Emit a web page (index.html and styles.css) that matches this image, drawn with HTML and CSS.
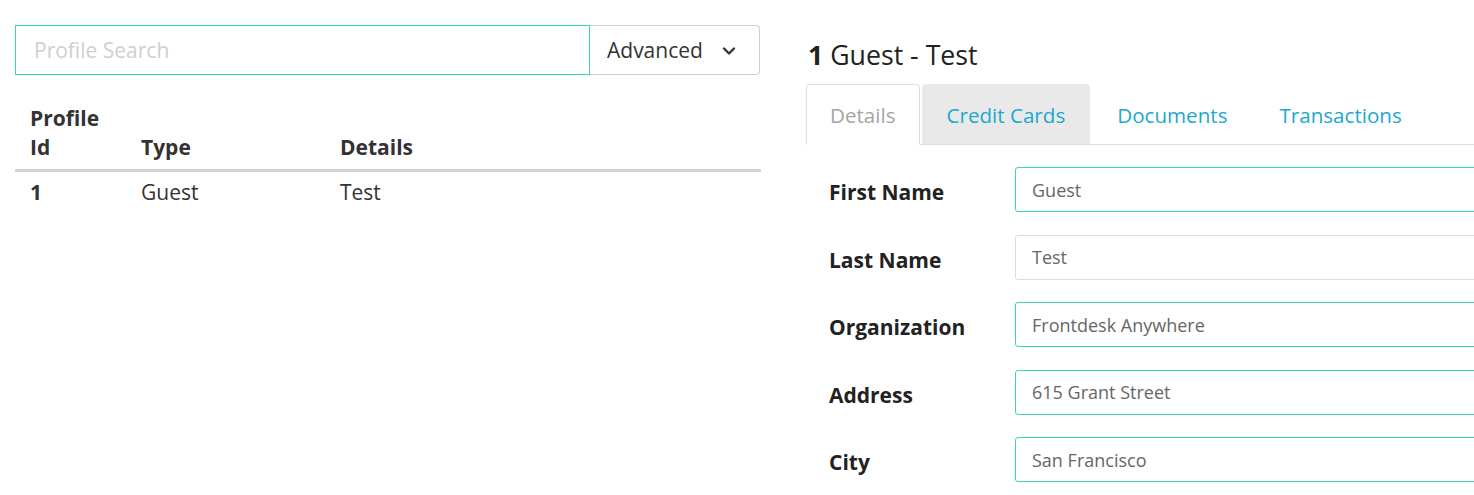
FILE: index.html
```html
<!DOCTYPE html>
<html>
<head>
<meta charset="utf-8">
<link rel="stylesheet" href="styles.css">
</head>
<body>
<div class="page">
  <section class="left">
    <div class="search">
      <input class="search-input" type="text" placeholder="Profile Search">
      <button class="adv-btn">Advanced
        <svg class="chev" width="14" height="10" viewBox="0 0 14 10"><path d="M2 2.5 L7 7.5 L12 2.5" fill="none" stroke="#333" stroke-width="2.4" stroke-linecap="round" stroke-linejoin="round"/></svg>
      </button>
    </div>
    <table class="profiles">
      <thead>
        <tr><th class="c1">Profile Id</th><th class="c2">Type</th><th>Details</th></tr>
      </thead>
      <tbody>
        <tr><td class="bold">1</td><td>Guest</td><td>Test</td></tr>
      </tbody>
    </table>
  </section>
  <section class="right">
    <h2 class="title"><b>1</b> Guest - Test</h2>
    <ul class="tabs">
      <li class="tab active">Details</li>
      <li class="tab hover">Credit Cards</li>
      <li class="tab">Documents</li>
      <li class="tab">Transactions</li>
    </ul>
    <div class="form">
      <label class="lbl">First Name</label><input class="fld green" value="Guest">
      <label class="lbl">Last Name</label><input class="fld" value="Test">
      <label class="lbl">Organization</label><input class="fld green" value="Frontdesk Anywhere">
      <label class="lbl">Address</label><input class="fld green" value="615 Grant Street">
      <label class="lbl">City</label><input class="fld green" value="San Francisco">
    </div>
  </section>
</div>
</body>
</html>
```

FILE: styles.css
```css
html, body {
  margin: 0;
  padding: 0;
  overflow: hidden;
  background: #fff;
}
body {
  font-family: "Open Sans", "Noto Sans", sans-serif;
  color: #333;
  width: 1474px;
  height: 495px;
}
.page {
  display: flex;
  gap: 45px;
  padding: 25px 0 0 15px;
}
.left {
  width: 746px;
  flex: 0 0 746px;
}
.search {
  display: flex;
  height: 50px;
}
.search-input {
  box-sizing: border-box;
  width: 575px;
  height: 50px;
  border: 1px solid #36dc93;
  border-radius: 0;
  padding: 0 18px;
  font-family: inherit;
  font-size: 21px;
  color: #333;
  outline: none;
}
.search-input::placeholder { color: #cfcfcf; }
.adv-btn {
  box-sizing: border-box;
  width: 170px;
  height: 50px;
  border: 1px solid #cfcfcf;
  border-left: none;
  border-radius: 0 4px 4px 0;
  background: #fff;
  font-family: inherit;
  font-size: 21px;
  color: #333;
  display: flex;
  align-items: center;
  padding: 0 0 0 17px;
  gap: 19px;
}
.chev { margin-top: 1px; }
.profiles {
  width: 746px;
  margin-top: 21px;
  border-collapse: collapse;
  table-layout: fixed;
  font-size: 21px;
  line-height: 29px;
}
.profiles th {
  text-align: left;
  font-weight: 700;
  vertical-align: bottom;
  padding: 8px 15px 7px;
  border-bottom: 3px solid #d4d4d4;
}
.profiles td {
  padding: 6px 15px;
}
.profiles .c1 { width: 81px; }
.profiles .c2 { width: 169px; }
.bold { font-weight: 700; }

.right {
  width: 746px;
  flex: 0 0 746px;
}
.title {
  margin: 12px 0 0 2px;
  font-size: 26.7px;
  line-height: 36px;
  font-weight: 400;
  color: #222;
}
.title b { font-weight: 700; }
.tabs {
  list-style: none;
  margin: 11px 0 0 0;
  padding: 0;
  display: flex;
  border-bottom: 1px solid #ddd;
}
.tab {
  font-size: 20.6px;
  line-height: 27px;
  padding: 17px 24px 15px;
  border: 1px solid transparent;
  border-radius: 4px 4px 0 0;
  margin: 0 2px -1px 0;
  color: #22a7d0;
}
.tab.active {
  padding: 17px 23px 15px;
  color: #a5a5a5;
  border-color: #ddd;
  border-bottom-color: #fff;
  background: #fff;
}
.tab.hover {
  background: #e9e9e9;
  border-color: #e9e9e9;
  border-bottom-color: #ddd;
}
.form {
  display: grid;
  grid-template-columns: 186px 1fr;
  row-gap: 22.5px;
  margin-top: 22px;
  padding-left: 23px;
  align-items: center;
}
.lbl {
  font-size: 21px;
  font-weight: 700;
  color: #222;
  padding-top: 5px;
}
.fld {
  box-sizing: border-box;
  height: 45px;
  width: 100%;
  border: 1px solid #ddd;
  border-radius: 3px;
  padding: 0 16px;
  font-family: inherit;
  font-size: 18px;
  color: #666;
  outline: none;
}
.fld.green { border-color: #36dc93; }
```
